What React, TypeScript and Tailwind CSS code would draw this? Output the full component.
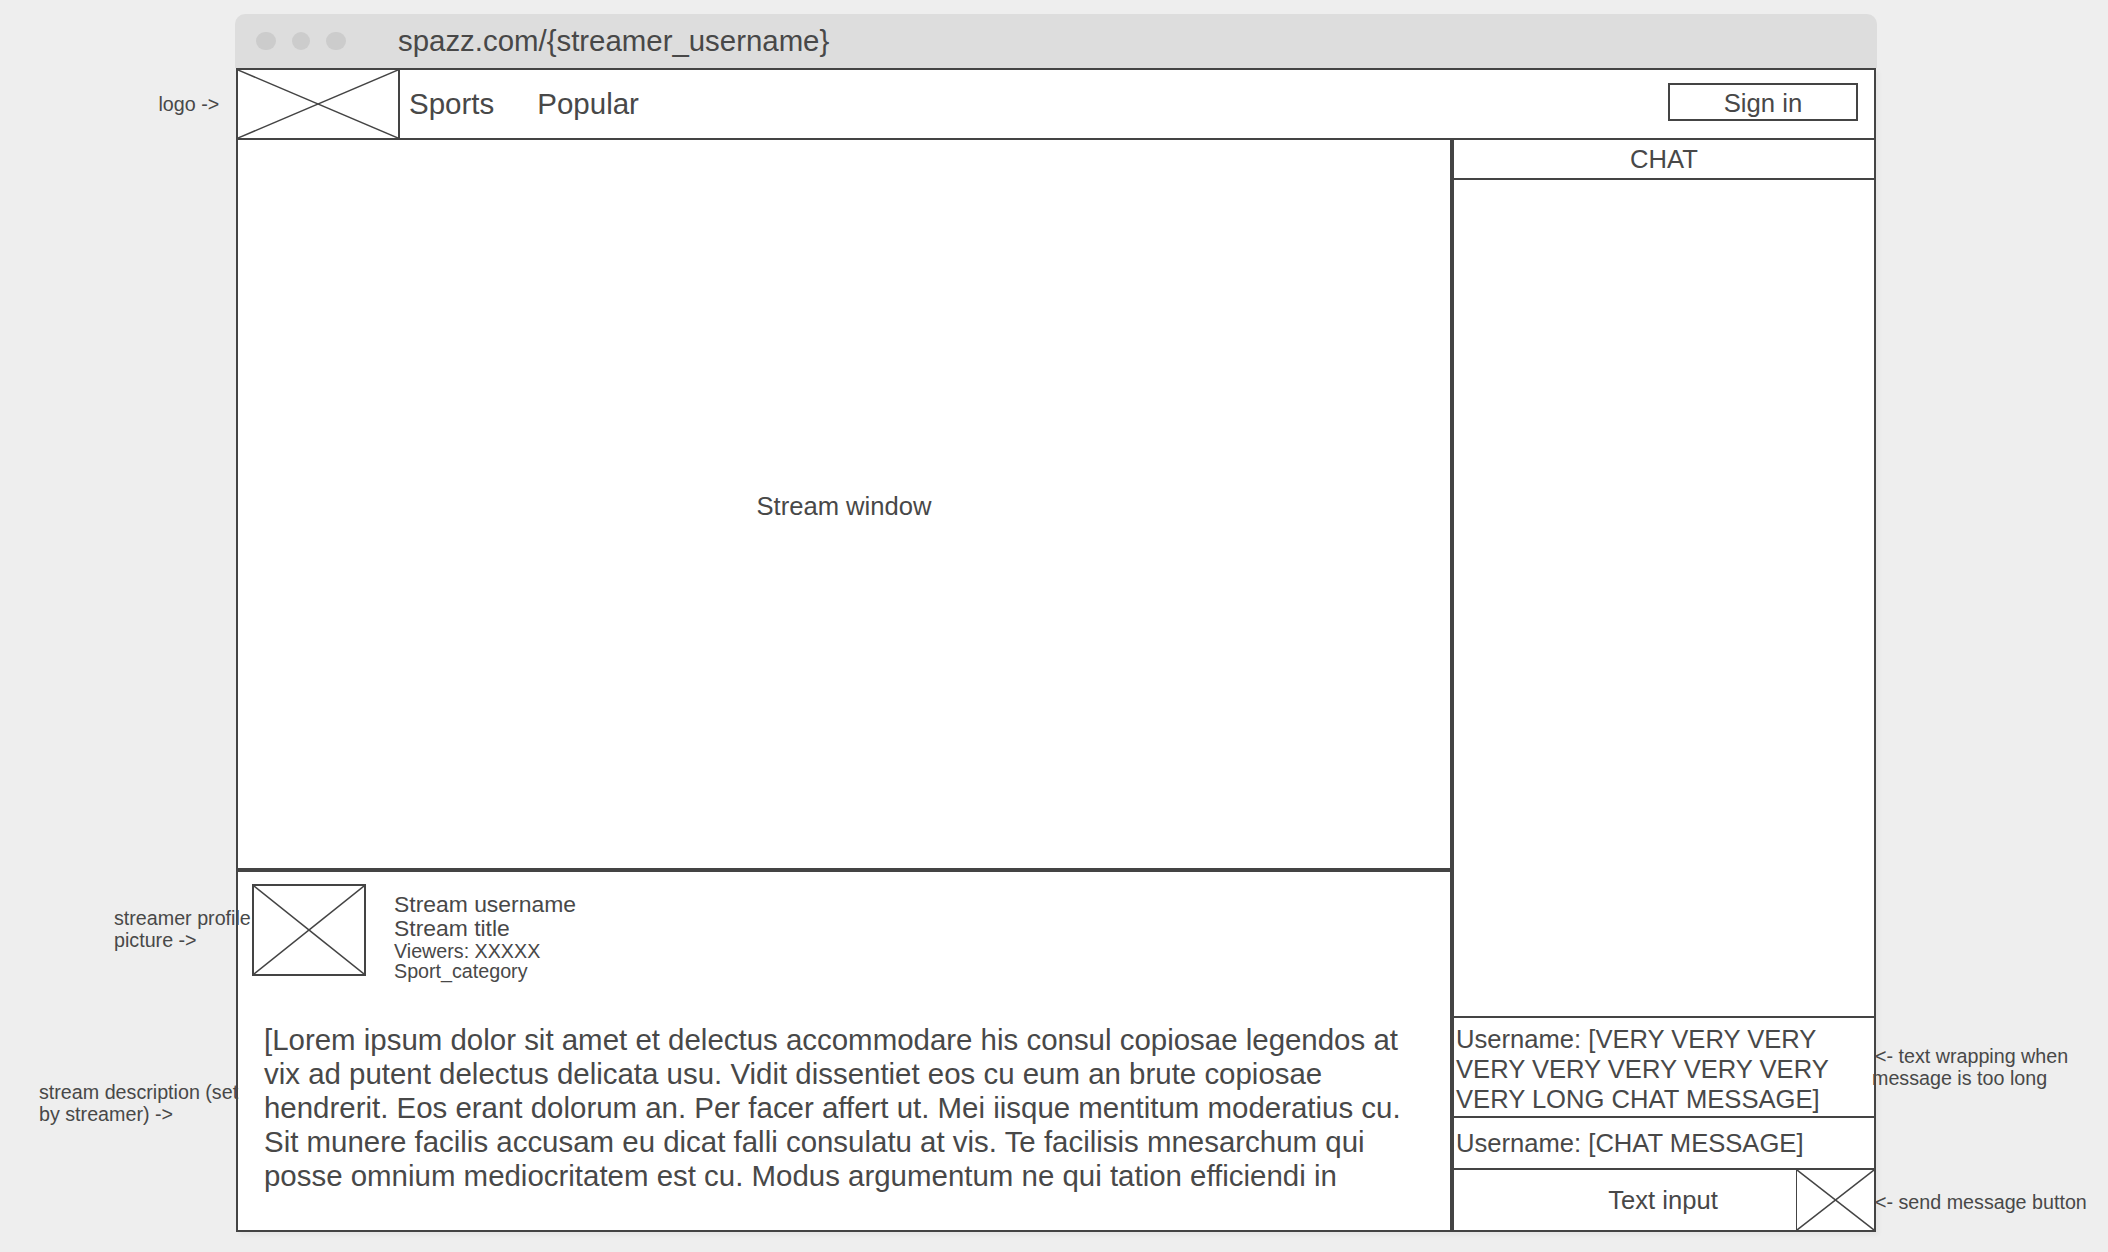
import React from 'react';

const Cross: React.FC = () => (
  <svg className="block h-full w-full" viewBox="0 0 100 100" preserveAspectRatio="none">
    <line x1="0" y1="0" x2="100" y2="100" stroke="#444444" strokeWidth="1.5" vectorEffect="non-scaling-stroke" />
    <line x1="100" y1="0" x2="0" y2="100" stroke="#444444" strokeWidth="1.5" vectorEffect="non-scaling-stroke" />
  </svg>
);

const Note: React.FC<{ className: string; children: React.ReactNode }> = ({ className, children }) => (
  <div className={`absolute z-10 whitespace-nowrap text-[19.7px] leading-[22px] text-[#484848] ${className}`}>{children}</div>
);

export default function App() {
  return (
    <div className="relative h-[1252px] w-[2108px] overflow-hidden bg-[#eeeeee] pl-[235px] pt-[14px] font-['Liberation_Sans',sans-serif] text-[#484848]">
      <div className="w-[1642px]">
        <div className="flex h-[54px] items-center rounded-t-[10px] bg-[#dddddd] pl-[21px]">
          <div className="flex items-center">
            <span className="h-[18px] w-[20px] rounded-full bg-[#cccccc]" />
            <span className="ml-[16px] h-[18px] w-[18px] rounded-full bg-[#cccccc]" />
            <span className="ml-[16px] h-[18px] w-[20px] rounded-full bg-[#cccccc]" />
          </div>
          <span className="ml-[52px] text-[29.4px]">spazz.com/{'{'}streamer_username{'}'}</span>
        </div>

        <div className="ml-px h-[1164px] w-[1640px] border-2 border-[#444444] bg-white shadow-[3px_3px_4px_rgba(0,0,0,0.04)]">
          <div className="flex h-[70px] items-center border-b-2 border-[#444444]">
            <div className="h-full w-[162px] border-r-2 border-[#444444]">
              <Cross />
            </div>
            <span className="ml-[9px] text-[29.5px]">Sports</span>
            <span className="ml-[43px] text-[29.5px]">Popular</span>
            <div className="ml-auto mr-[16px] mb-[4px] flex h-[38px] w-[190px] items-center justify-center border-2 border-[#444444] pt-[2px] text-[25.7px]">
              Sign in
            </div>
          </div>

          <div className="flex h-[1090px]">
            <div className="flex w-[1212px] flex-col">
              <div className="flex h-[728px] items-center justify-center pt-[4px] text-[25.6px]">Stream window</div>
              <div className="h-[362px] border-t-4 border-[#444444] pl-[14px] pt-[12px]">
                <div className="flex">
                  <div className="h-[92px] w-[114px] border-2 border-[#444444]">
                    <Cross />
                  </div>
                  <div className="ml-[28px] pt-[8px]">
                    <div className="text-[22.9px] leading-[24px]">Stream username</div>
                    <div className="text-[22.9px] leading-[24px]">Stream title</div>
                    <div className="mt-[1px] text-[19.7px] leading-[20px]">Viewers: XXXXX</div>
                    <div className="text-[19.7px] leading-[20px]">Sport_category</div>
                  </div>
                </div>
                <p className="ml-[12px] mt-[42px] w-[1170px] text-[29.45px] leading-[34px]">
                  [Lorem ipsum dolor sit amet et delectus accommodare his consul copiosae legendos at vix ad putent delectus delicata usu. Vidit dissentiet eos cu eum an brute copiosae hendrerit. Eos erant dolorum an. Per facer affert ut. Mei iisque mentitum moderatius cu. Sit munere facilis accusam eu dicat falli consulatu at vis. Te facilisis mnesarchum qui posse omnium mediocritatem est cu. Modus argumentum ne qui tation efficiendi in
                </p>
              </div>
            </div>

            <div className="flex w-[424px] flex-col border-l-4 border-[#444444]">
              <div className="flex h-[40px] items-center justify-center border-b-2 border-[#444444] text-[25.6px]">CHAT</div>
              <div className="flex-1" />
              <div className="h-[100px] border-t-2 border-[#444444] pl-[2px] pt-[6px] text-[25.6px] leading-[30px]">
                Username: [VERY VERY VERY VERY VERY VERY VERY VERY VERY LONG CHAT MESSAGE]
              </div>
              <div className="flex h-[52px] items-center border-t-2 border-[#444444] pl-[2px] text-[25.6px]">Username: [CHAT MESSAGE]</div>
              <div className="relative flex h-[62px] items-center justify-center border-t-2 border-[#444444] pr-[2px] text-[25.6px]">
                Text input
                <div className="absolute bottom-0 right-0 top-0 w-[78px] border-l-[1.5px] border-[#444444]">
                  <Cross />
                </div>
              </div>
            </div>
          </div>
        </div>
      </div>

      <Note className="left-[158.5px] top-[93px]">logo -&gt;</Note>
      <Note className="left-[114px] top-[907px]">streamer profile<br />picture -&gt;</Note>
      <Note className="left-[39px] top-[1081px]">stream description (set<br />by streamer) -&gt;</Note>
      <Note className="left-[1875px] top-[1045px]">&lt;- text wrapping when<br /><span className="-ml-[3px]">message is too long</span></Note>
      <Note className="left-[1875px] top-[1191px]">&lt;- send message button</Note>
    </div>
  );
}
